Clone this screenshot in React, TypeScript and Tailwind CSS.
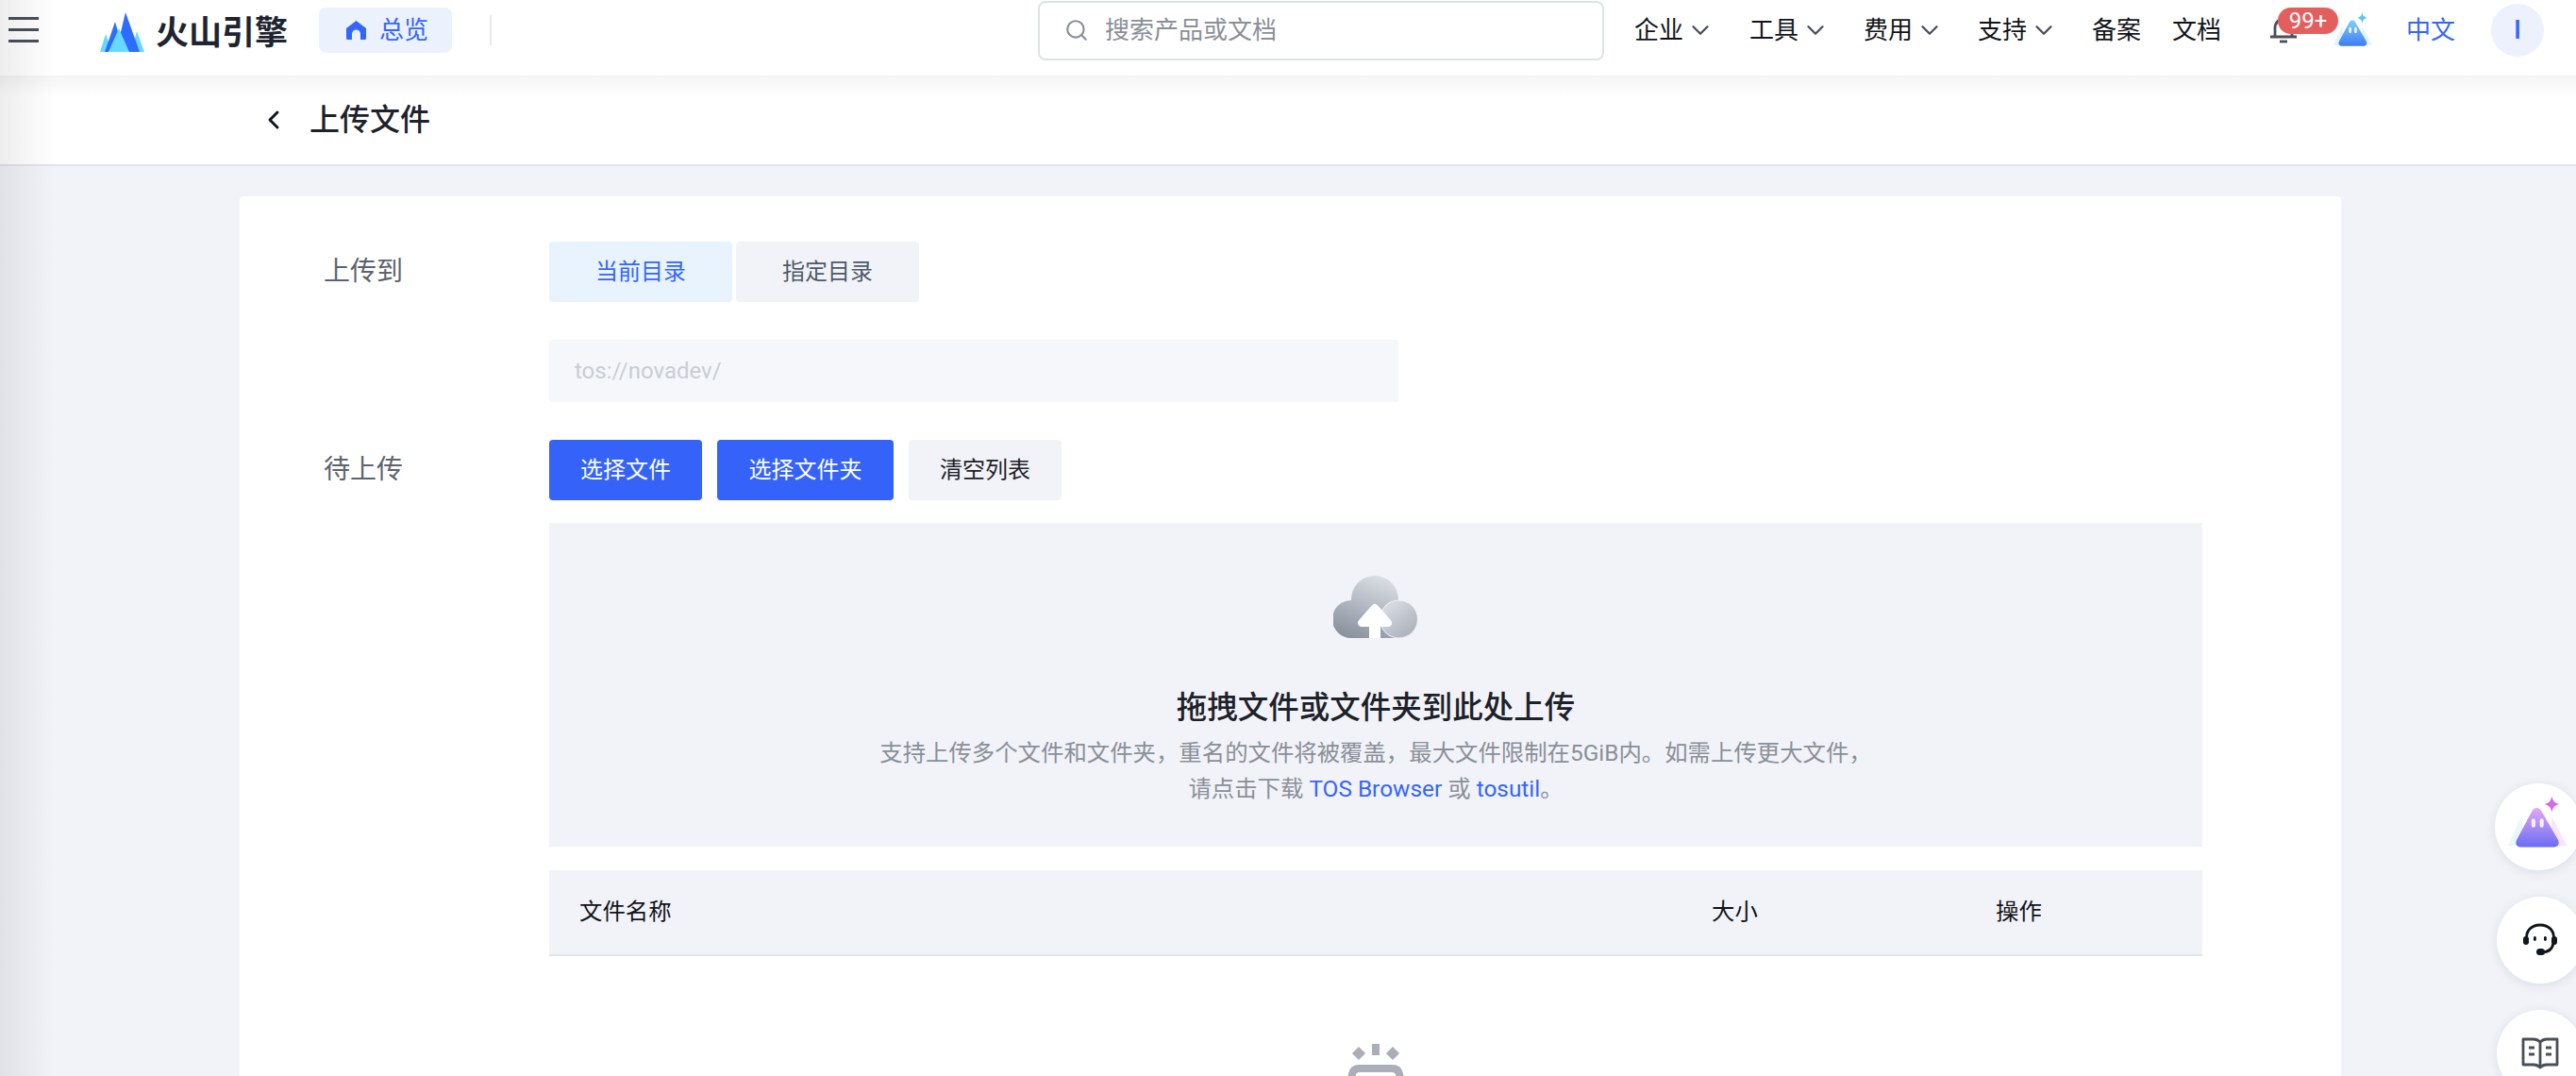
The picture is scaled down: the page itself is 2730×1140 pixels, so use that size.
import { ChevronDown, ChevronLeft, Search } from 'lucide-react';

const navItems = [
  { label: '企业', width: 'w-[122px]' },
  { label: '工具', width: 'w-[121px]' },
  { label: '费用', width: 'w-[121px]' },
  { label: '支持', width: 'w-[121px]' },
];

function Logo() {
  return (
    <svg width="48" height="44" viewBox="0 0 48 44">
      <path d="M0 42 6 23 13 42Z" fill="#66d9ff" />
      <path d="M39 20 47 42H33Z" fill="#66d9ff" />
      <path d="M27 0 42 42H17Z" fill="#2e6bff" />
      <path d="M16 10 25 42H5Z" fill="#2e6bff" />
      <path d="M20 17 31 42H9Z" fill="#66d9ff" />
    </svg>
  );
}

function Mascot({ id, from, to, wing, star, size }: { id: string; from: string; to: string; wing: string; star: string; size: number }) {
  return (
    <svg width={size} height={size} viewBox="0 0 40 36">
      <defs>
        <linearGradient id={id} x1="0.5" y1="0" x2="0.5" y2="1">
          <stop offset="0" stopColor={from} />
          <stop offset="1" stopColor={to} />
        </linearGradient>
      </defs>
      <path d="M9 13 0 33h10Z" fill={wing} opacity="0.35" />
      <path d="M29 14 39 33H28Z" fill={star} opacity="0.18" />
      <path d="M19 8c1.400 0 2.200.6 3 1.900L33 29c1.400 2.600.2 5-2.800 5H8.500C5.500 34 4.400 31.500 5.800 29L16 9.900C16.800 8.600 17.700 8 19 8Z" fill={`url(#${id})`} />
      <rect x="15.500" y="15" width="2.600" height="6" rx="1.300" fill="#fff" opacity="0.85" />
      <rect x="21" y="15" width="2.600" height="6" rx="1.300" fill="#fff" opacity="0.85" />
      <path d="M29 0c.6 3.400 1.900 4.700 5 5.500-3.100.8-4.400 2.100-5 5.500-.6-3.400-1.900-4.700-5-5.500 3.100-.8 4.400-2.100 5-5.500Z" fill={star} />
    </svg>
  );
}

function CloudIcon() {
  return (
    <svg width="89" height="68" viewBox="33 18 89 68" className="mr-[2px]">
      <defs>
        <linearGradient id="cloudA" x1="0.75" y1="0" x2="0.35" y2="1">
          <stop offset="0" stopColor="#dcdfe6" />
          <stop offset="1" stopColor="#8b939f" />
        </linearGradient>
        <linearGradient id="cloudB" x1="0.1" y1="0" x2="0.9" y2="1">
          <stop offset="0" stopColor="#dfe2e8" />
          <stop offset="1" stopColor="#a6acb6" />
        </linearGradient>
      </defs>
      <path d="M52 86a20 20 0 0 1 0-40 25 25 0 0 1 50-2 L103 86Z" fill="url(#cloudA)" />
      <circle cx="102.500" cy="66" r="20" fill="url(#cloudB)" stroke="#f1f3f8" strokeWidth="1" />
      <rect x="71" y="70" width="12" height="16" fill="#fff" />
      <path d="M77 54 63 70h28Z" fill="#fff" stroke="#fff" strokeWidth="8" strokeLinejoin="round" />
    </svg>
  );
}

function Headset() {
  return (
    <svg width="38" height="36" viewBox="0 0 38 36" fill="none">
      <path d="M5 18C3 8 10 2 19 2s16 6 14 16" stroke="#11141a" strokeWidth="2.800" />
      <rect x="1" y="14" width="6" height="9" rx="3" fill="#11141a" />
      <rect x="31" y="14" width="6" height="9" rx="3" fill="#11141a" />
      <path d="M33 21c-1 7-6 10-13 10" stroke="#11141a" strokeWidth="2.800" />
      <rect x="15" y="27" width="9" height="7" rx="3.500" fill="#11141a" />
      <rect x="12" y="14" width="2.800" height="5" rx="1.400" fill="#11141a" />
      <rect x="23" y="14" width="2.800" height="5" rx="1.400" fill="#11141a" />
    </svg>
  );
}

function BookIcon() {
  return (
    <svg width="40" height="34" viewBox="0 0 40 34" fill="none" stroke="#4b4f58" strokeWidth="2.800" strokeLinejoin="round">
      <path d="M20 5c-2-2-4-3-7-3H2v27h11c3 0 5 1 7 3 2-2 4-3 7-3h11V2H27c-3 0-5 1-7 3Zm0 0v27" />
      <path d="M8 11h6M8 18h6M26 11h6M26 18h6" />
    </svg>
  );
}

function App() {
  return (
    <div className="relative h-[1140px] w-[2730px] overflow-hidden bg-[#f1f3f8] font-['Roboto','Noto_Sans_CJK_SC',sans-serif] text-[26px]">
      <header className="relative z-10 flex h-[80px] items-center bg-white text-[#11141a]">
        <div className="ml-[9px] mt-[-18px] flex h-[27px] w-[32px] flex-col justify-between">
          <span className="h-[3px] bg-[#4b4f5c]" />
          <span className="h-[3px] bg-[#4b4f5c]" />
          <span className="h-[3px] bg-[#4b4f5c]" />
        </div>
        <div className="ml-[65px] mt-[-10px]">
          <Logo />
        </div>
        <span className="ml-[11px] mt-[-10px] text-[35px] font-bold leading-none text-[#1e2530]">火山引擎</span>
        <div className="ml-[33px] mt-[-16px] flex h-[48px] w-[141px] items-center gap-[14px] rounded-[8px] bg-[#ebf1fd] pl-[29px] text-[#3366ff]">
          <svg width="21" height="20" viewBox="0 0 21 20">
            <path d="M10.500 0 21 8v10.500a1.500 1.500 0 0 1-1.500 1.500H15v-6a4.500 4.500 0 0 0-9 0v6H1.500A1.500 1.500 0 0 1 0 18.500V8Z" fill="#3366ff" />
          </svg>
          <span>总览</span>
        </div>
        <div className="ml-[40px] mt-[-16px] h-[32px] w-[2px] bg-[#e8eaee]" />
        <div className="ml-[579px] mt-[-16px] flex h-[63px] w-[600px] items-center rounded-[8px] border-2 border-[#dde2e9] pl-[26px] text-[#8a8f99]">
          <Search size={26} strokeWidth={2} />
          <span className="ml-[17px]">搜索产品或文档</span>
        </div>
        <div className="ml-[32px] mt-[-16px] flex items-center">
          {navItems.map((item) => (
            <div key={item.label} className={`flex items-center gap-[3px] ${item.width}`}>
              <span>{item.label}</span>
              <ChevronDown size={30} strokeWidth={1.9} className="text-[#4b4f5c]" />
            </div>
          ))}
          <span>备案</span>
          <span className="ml-[33px]">文档</span>
        </div>
        <div className="relative ml-[52px] mt-[-16px] flex h-[30px] w-[28px] items-center">
          <svg width="28" height="28" viewBox="0 0 28 28" fill="none" stroke="#4b4f58" strokeWidth="2.800">
            <path d="M0 21h28M5 21V12C5 6 9 2 14 2s9 4 9 10v9" />
            <path d="M10 26h8" />
          </svg>
          <span className="absolute left-[8px] top-[-9px] flex h-[28px] w-[64px] items-center justify-center rounded-full bg-[#e55e5e] text-[24px] leading-none text-white">99+</span>
        </div>
        <div className="ml-[39px] mt-[-16px]">
          <Mascot id="navMascot" from="#7fd0ff" to="#3d7bf5" wing="#9fe4fa" star="#5cc6f8" size={42} />
        </div>
        <span className="ml-[35px] mt-[-16px] text-[#3366ff]">中文</span>
        <div className="ml-[38px] mt-[-16px] flex h-[56px] w-[56px] items-center justify-center rounded-full bg-[#ecf1fd] text-[28px] font-medium text-[#3366ff]">I</div>
      </header>

      <div className="flex h-[96px] items-center border-b-2 border-[#e3e5ec] bg-gradient-to-b from-[#f4f4f4] via-white via-[24%] to-white pl-[274px]">
        <ChevronLeft size={32} strokeWidth={2.2} className="text-[#11141a]" />
        <span className="ml-[22px] text-[32px] font-medium leading-none text-[#1d2129]">上传文件</span>
      </div>

      <main className="pl-[254px] pr-[249px] pt-[32px]">
        <div className="h-[964px] rounded-[4px] bg-white pl-[89px] pr-[147px] pt-[48px]">
          <div className="grid grid-cols-[239px_1fr]">
            <div className="flex h-[64px] items-center text-[28px] text-[#5c6370]">上传到</div>
            <div className="flex gap-[4px] text-[24px]">
              <div className="flex h-[64px] w-[194px] items-center justify-center rounded-[4px] bg-[#e9f3fe] text-[#3366ff]">当前目录</div>
              <div className="flex h-[64px] w-[194px] items-center justify-center rounded-[4px] bg-[#f2f3f8] text-[#4e5969]">指定目录</div>
            </div>
            <div />
            <div className="mt-[40px] flex h-[66px] w-[900px] items-center rounded-[4px] bg-[#f6f7fb] pl-[27px] text-[24px] text-[#c9cdd4]">tos://novadev/</div>
            <div className="mt-[40px] flex h-[64px] items-center text-[28px] text-[#5c6370]">待上传</div>
            <div className="mt-[40px] flex gap-[16px] text-[24px]">
              <div className="flex h-[64px] w-[162px] items-center justify-center rounded-[4px] bg-[#3563f9] text-white">选择文件</div>
              <div className="flex h-[64px] w-[187px] items-center justify-center rounded-[4px] bg-[#3563f9] text-white">选择文件夹</div>
              <div className="flex h-[64px] w-[162px] items-center justify-center rounded-[4px] bg-[#f2f3f8] text-[#1d2129]">清空列表</div>
            </div>
            <div />
            <div>
              <div className="mt-[24px] flex h-[343px] flex-col items-center bg-[#f1f3f8] pt-[54px]">
                <CloudIcon />
                <div className="mt-[52px] text-[32.5px] font-medium leading-[44px] text-[#1d2129]">拖拽文件或文件夹到此处上传</div>
                <p className="mt-[7px] text-center text-[24.4px] leading-[38px] text-[#8a8f99]">
                  支持上传多个文件和文件夹，重名的文件将被覆盖，最大文件限制在5GiB内。如需上传更大文件，
                  <br />
                  请点击下载 <span className="text-[#3366ff]">TOS Browser</span> 或 <span className="text-[#3366ff]">tosutil</span>。
                </p>
              </div>
              <div className="mt-[25px] grid h-[91px] grid-cols-[1200px_301px_1fr] items-center border-b-2 border-[#e3e5ec] bg-[#f1f3f8] pl-[32px] text-[24.4px] text-[#11141a]">
                <span>文件名称</span>
                <span>大小</span>
                <span>操作</span>
              </div>
              <div className="flex justify-center pt-[93px]">
                <svg width="72" height="80" viewBox="0 0 72 80" fill="none">
                  <rect x="32" y="0" width="8" height="12" fill="#a9aeb8" />
                  <rect x="13" y="5" width="10" height="10" transform="rotate(45 18 10)" fill="#a9aeb8" />
                  <rect x="49" y="5" width="10" height="10" transform="rotate(45 54 10)" fill="#a9aeb8" />
                  <path d="M6 60 11 32Q12 26 19 26H53Q60 26 61 32L66 60" stroke="#a9aeb8" strokeWidth="8" />
                </svg>
              </div>
            </div>
          </div>
        </div>
      </main>

      {/* left edge shade */}
      <div className="pointer-events-none absolute inset-y-0 left-0 z-20 w-[58px] bg-gradient-to-r from-black/7 to-transparent" />

      {/* floating helpers */}
      <div className="absolute left-[2644px] top-[830px] z-20 flex h-[92px] w-[92px] items-center justify-center rounded-full bg-white pb-[8px] shadow-[0_2px_12px_rgba(30,40,80,0.1)]">
        <Mascot id="sideMascot" from="#e3a8f5" to="#6a6cf5" wing="#bfe8fa" star="#d86ce8" size={64} />
      </div>
      <div className="absolute left-[2646px] top-[950px] z-20 flex h-[92px] w-[92px] items-center justify-center rounded-full bg-white shadow-[0_2px_12px_rgba(30,40,80,0.1)]">
        <Headset />
      </div>
      <div className="absolute left-[2646px] top-[1070px] z-20 flex h-[92px] w-[92px] items-center justify-center rounded-full bg-white shadow-[0_2px_12px_rgba(30,40,80,0.1)]">
        <BookIcon />
      </div>
    </div>
  );
}

export default App;
